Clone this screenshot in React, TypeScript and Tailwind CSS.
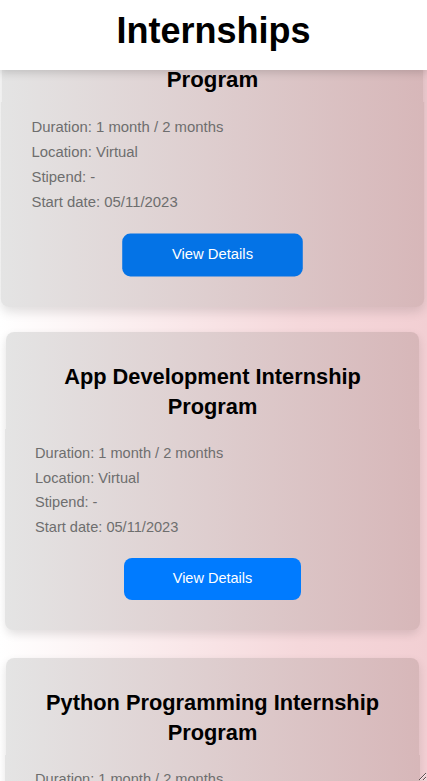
import React from "react";

const items = [
  { title: "Web Development Internship Program", hover: true },
  { title: "App Development Internship Program", hover: false },
  { title: "Python Programming Internship Program", hover: false },
];

function Card({ title, hover }: { title: string; hover: boolean }) {
  return (
    <div
      className={
        "ml-[6px] w-[413px] h-[298px] rounded-[8px] bg-gradient-to-r from-[#e4e4e4] to-[#d7b7b9] shadow-[0_4px_10px_rgba(0,0,0,0.12)] flex flex-col " +
        (hover ? "scale-[1.02]" : "")
      }
    >
      <div className="pt-[30px] px-[20px] h-[97px]">
        <h3 className="text-center text-[21.8px] leading-[30px] font-bold text-black">{title}</h3>
      </div>
      <div className="-mx-px flex-1 rounded-b-[8px] bg-gradient-to-r from-[#e4e4e4] to-[#d7b7b9] flex flex-col">
        <div className="pl-[30px] pt-[12px] text-[14.6px] leading-[24.5px] text-[#6e6e6e]">
          <p>Duration: 1 month / 2 months</p>
          <p>Location: Virtual</p>
          <p>Stipend: -</p>
          <p>Start date: 05/11/2023</p>
        </div>
        <div className="flex justify-center pt-[19px]">
          <button
            className={
              "w-[177px] h-[42px] rounded-[8px] text-white text-[14.5px] " +
              (hover ? "bg-[#0473e6]" : "bg-[#007bff]")
            }
          >
            View Details
          </button>
        </div>
      </div>
    </div>
  );
}

export default function App() {
  return (
    <div
      className="relative h-[781px] w-[427px] overflow-hidden resize bg-gradient-to-r from-[#ffffff] via-[#f5d8db] via-70% to-[#f2cfd3]"
      style={{ fontFamily: '"Liberation Sans", Arial, sans-serif' }}
    >
      <div className="flex flex-col gap-[28px] pt-[6px]">
        {items.map((it) => (
          <Card key={it.title} title={it.title} hover={it.hover} />
        ))}
      </div>
      <header className="absolute top-0 left-0 right-0 h-[70px] bg-white shadow-[0_3px_8px_rgba(0,0,0,0.15)] flex items-center justify-center">
        <h1 className="text-[36px] font-bold text-black leading-none -mt-[8px]">Internships</h1>
      </header>
    </div>
  );
}
